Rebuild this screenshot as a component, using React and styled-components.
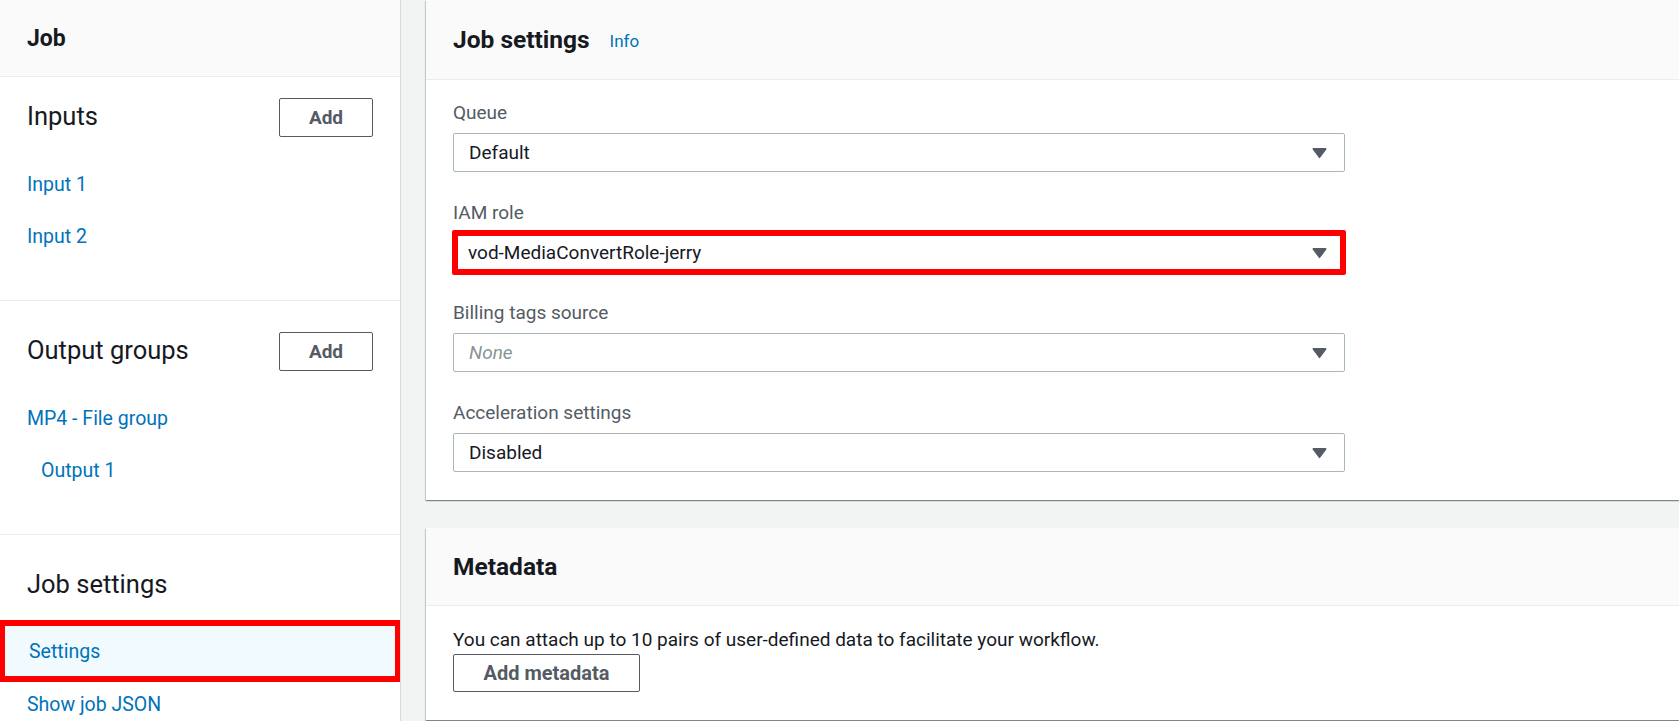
import { createGlobalStyle, styled } from "styled-components";

const GlobalStyle = createGlobalStyle`
  body {
    margin: 0;
    background: #f2f3f3;
    font-family: Roboto, "Liberation Sans", Arial, sans-serif;
    color: #16191f;
  }
`;

const Layout = styled.div`
  display: grid;
  grid-template-columns: 401px 1fr;
  height: 721px;
  overflow: hidden;
`;

const Sidebar = styled.aside`
  background: #fff;
  border-right: 1px solid #d5dbdb;
  overflow: hidden;
`;

const SideHeader = styled.div`
  height: 76px;
  display: flex;
  align-items: center;
  padding-left: 27px;
  background: #fafafa;
  border-bottom: 1px solid #eaeded;
  font-size: 23px;
  font-weight: 700;
`;

const SideSection = styled.section`
  padding: ${(p) => (p.$first ? "21px" : "31px")} 27px 38px 0;
  border-bottom: 1px solid #eaeded;

  &:last-child {
    border-bottom: none;
  }
`;

const SectionHead = styled.div`
  display: flex;
  align-items: center;
  justify-content: space-between;
  height: 39px;
  padding-left: 27px;
  margin-bottom: 21px;
  font-size: 25.5px;

  span {
    margin-top: -4px;
  }
`;

const Button = styled.button`
  box-sizing: border-box;
  height: ${(p) => p.$h || 39}px;
  width: ${(p) => p.$w}px;
  background: #fff;
  border: 1px solid #545b64;
  border-radius: 2px;
  color: #545b64;
  font-family: inherit;
  font-size: ${(p) => p.$fs || 19}px;
  font-weight: 700;
  padding: 0;
`;

const NavLink = styled.a`
  display: flex;
  align-items: center;
  height: 52px;
  padding-left: ${(p) => (p.$indent ? 41 : 27)}px;
  font-size: 19.5px;
  color: #0073bb;
  text-decoration: none;
`;

const ActiveLink = styled(NavLink)`
  box-sizing: border-box;
  height: 62px;
  margin: -6px -27px -4px 0;
  padding-left: 24px;
  background: #f1faff;
  border: 5px solid #f00;
  border-top-width: 6px;
  border-bottom-width: 6px;
`;

const Main = styled.main`
  display: flex;
  flex-direction: column;
  gap: 28px;
  padding-left: 25px;
  min-width: 0;
`;

const Panel = styled.section`
  background: #fff;
  box-shadow: 0 1px 1px 0 rgba(0, 28, 36, 0.3), 1px 1px 1px 0 rgba(0, 28, 36, 0.15),
    -1px 1px 1px 0 rgba(0, 28, 36, 0.15);
`;

const PanelHeader = styled.div`
  box-sizing: border-box;
  height: ${(p) => p.$h}px;
  display: flex;
  align-items: center;
  gap: 20px;
  padding-left: 27px;
  background: #fafafa;
  border-bottom: 1px solid #eaeded;
`;

const PanelTitle = styled.h2`
  margin: 0;
  font-size: 24.5px;
  font-weight: 700;
`;

const Info = styled.a`
  font-size: 17px;
  color: #0073bb;
  padding-top: 2px;
`;

const PanelBody = styled.div`
  display: flex;
  flex-direction: column;
  gap: ${(p) => p.$gap || 0}px;
  padding: ${(p) => p.$pt}px 27px 28px;
`;

const Field = styled.div`
  display: flex;
  flex-direction: column;
  width: 892px;
  margin-bottom: 28px;

  &:last-child {
    margin-bottom: 0;
  }
`;

const Label = styled.label`
  font-size: 19px;
  line-height: 26px;
  color: #545b64;
  margin-bottom: 7px;
`;

const Select = styled.div`
  box-sizing: border-box;
  height: ${(p) => (p.$flag ? 45 : 39)}px;
  margin: ${(p) => (p.$flag ? "-3px -1px" : "0")};
  display: flex;
  align-items: center;
  justify-content: space-between;
  padding: 0 ${(p) => (p.$flag ? 13 : 17)}px 0 ${(p) => (p.$flag ? 10 : 15)}px;
  border: ${(p) => (p.$flag ? "6px solid #f00" : "1px solid #aab7b8")};
  border-radius: 2px;
  background: #fff;
  font-size: 19px;
  color: ${(p) => (p.$placeholder ? "#879596" : "#16191f")};
  font-style: ${(p) => (p.$placeholder ? "italic" : "normal")};
`;

const Caret = () => (
  <svg width="15" height="12" viewBox="0 0 15 12">
    <path d="M1.5 1h12a1 1 0 0 1 .8 1.6L8.3 10.6a1 1 0 0 1-1.6 0L.7 2.6A1 1 0 0 1 1.5 1z" fill="#545b64" />
  </svg>
);

const Text = styled.p`
  margin: 0;
  font-size: 19px;
  line-height: 24px;
`;

const fields = [
  { label: "Queue", value: "Default" },
  { label: "IAM role", value: "vod-MediaConvertRole-jerry", flag: true },
  { label: "Billing tags source", value: "None", placeholder: true },
  { label: "Acceleration settings", value: "Disabled" },
];

export default function App() {
  return (
    <>
      <GlobalStyle />
      <Layout>
        <Sidebar>
          <SideHeader>Job</SideHeader>
          <SideSection $first>
            <SectionHead>
              <span>Inputs</span>
              <Button $w={94}>Add</Button>
            </SectionHead>
            <NavLink>Input 1</NavLink>
            <NavLink>Input 2</NavLink>
          </SideSection>
          <SideSection>
            <SectionHead>
              <span>Output groups</span>
              <Button $w={94}>Add</Button>
            </SectionHead>
            <NavLink>MP4 - File group</NavLink>
            <NavLink $indent>Output 1</NavLink>
          </SideSection>
          <SideSection>
            <SectionHead>
              <span>Job settings</span>
            </SectionHead>
            <ActiveLink>Settings</ActiveLink>
            <NavLink>Show job JSON</NavLink>
          </SideSection>
        </Sidebar>
        <Main>
          <Panel>
            <PanelHeader $h={80}>
              <PanelTitle>Job settings</PanelTitle>
              <Info>Info</Info>
            </PanelHeader>
            <PanelBody $pt={20}>
              {fields.map((f) => (
                <Field key={f.label}>
                  <Label>{f.label}</Label>
                  <Select $flag={f.flag} $placeholder={f.placeholder}>
                    {f.value}
                    <Caret />
                  </Select>
                </Field>
              ))}
            </PanelBody>
          </Panel>
          <Panel>
            <PanelHeader $h={78}>
              <PanelTitle>Metadata</PanelTitle>
            </PanelHeader>
            <PanelBody $pt={22} $gap={2}>
              <Text>You can attach up to 10 pairs of user-defined data to facilitate your workflow.</Text>
              <Button $w={187} $h={38} $fs={20}>Add metadata</Button>
            </PanelBody>
          </Panel>
        </Main>
      </Layout>
    </>
  );
}
